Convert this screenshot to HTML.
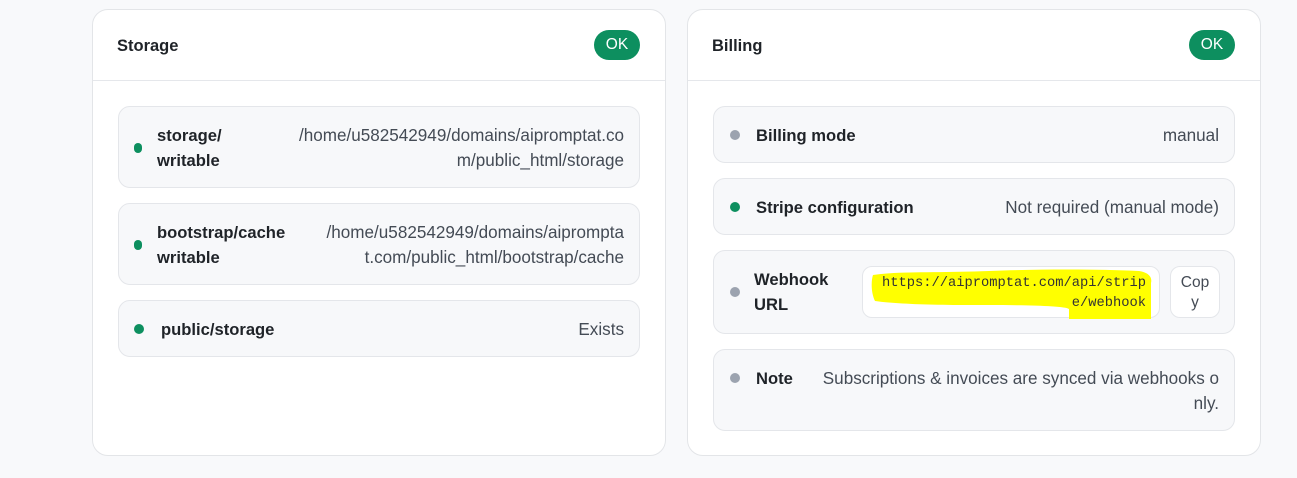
<!DOCTYPE html>
<html><head><style>
*{box-sizing:border-box;margin:0;padding:0}
body{width:1297px;height:478px;background:#f8f9fb;font-family:"Liberation Sans",sans-serif;color:#212529;position:relative;overflow:hidden;font-size:16px}
.card{position:absolute;top:9px;width:574px;height:447px;background:#fff;border:1px solid #e3e5e8;border-radius:16px}
.hd{position:absolute;left:0;right:0;top:0;height:71px;border-bottom:1px solid #e5e7eb}
.ttl{position:absolute;left:24px;top:27px;font-weight:bold;font-size:16.5px;color:#1f2328}
.ok{position:absolute;right:25px;top:20px;width:46px;height:30px;border-radius:15px;background:#0d8f5f;color:#fff;font-size:15.5px;text-align:center;line-height:30px}
.row{position:absolute;background:#f7f8fa;border:1px solid #e4e6ea;border-radius:12px}
.dot{position:absolute;width:8px;height:10px;border-radius:4px;background:#0d8f5f}
.g{background:#9ca3af;width:10px;height:10px;border-radius:5px}
.lb{position:absolute;font-weight:bold;line-height:25px;color:#1f2328;font-size:16.6px;white-space:nowrap}
.vl{position:absolute;right:15px;text-align:right;line-height:25px;color:#444b55;font-size:17.1px;white-space:nowrap}
.mono{font-family:"Liberation Mono",monospace;font-size:13.75px}
</style></head><body>
<div class="card" style="left:92px">
 <div class="hd"><div class="ttl">Storage</div><div class="ok">OK</div></div>
 <div class="row" style="left:25px;top:96px;width:522px;height:82px">
  <div class="dot" style="left:15px;top:36px"></div>
  <div class="lb" style="left:38px;top:16px">storage/<br>writable</div>
  <div class="vl" style="top:16px">/home/u582542949/domains/aipromptat.co<br>m/public_html/storage</div>
 </div>
 <div class="row" style="left:25px;top:193px;width:522px;height:82px">
  <div class="dot" style="left:15px;top:36px"></div>
  <div class="lb" style="left:38px;top:16px">bootstrap/cache<br>writable</div>
  <div class="vl" style="top:16px">/home/u582542949/domains/aipromptа<br>t.com/public_html/bootstrap/cache</div>
 </div>
 <div class="row" style="left:25px;top:290px;width:522px;height:57px">
  <div class="dot" style="left:15px;top:23px;width:10px;height:10px;border-radius:5px"></div>
  <div class="lb" style="left:42px;top:16px">public/storage</div>
  <div class="vl" style="top:16px">Exists</div>
 </div>
</div>
<div class="card" style="left:687px">
 <div class="hd"><div class="ttl">Billing</div><div class="ok">OK</div></div>
 <div class="row" style="left:25px;top:96px;width:522px;height:57px">
  <div class="dot g" style="left:16px;top:23px"></div>
  <div class="lb" style="left:42px;top:16px">Billing mode</div>
  <div class="vl" style="top:16px">manual</div>
 </div>
 <div class="row" style="left:25px;top:168px;width:522px;height:57px">
  <div class="dot" style="left:16px;top:23px;width:10px;height:10px;border-radius:5px"></div>
  <div class="lb" style="left:42px;top:16px">Stripe configuration</div>
  <div class="vl" style="top:16px">Not required (manual mode)</div>
 </div>
 <div class="row" style="left:25px;top:240px;width:522px;height:84px">
  <div class="dot g" style="left:16px;top:36px"></div>
  <div class="lb" style="left:40px;top:16px">Webhook<br>URL</div>
  <div style="position:absolute;left:148px;top:15px;width:298px;height:52px;background:#fff;border:1px solid #e4e6ea;border-radius:10px"></div>
  <svg style="position:absolute;left:155px;top:18px" width="290" height="50"><path d="M4 6 C30 2 70 4 120 2 C170 0 230 0 270 2 C282 4 283 10 282 14 L282 50 C260 52 230 52 200 51 L200 40 C195 36 140 36 90 36 C50 36 20 34 6 32 C2 24 2 12 4 6 Z" fill="#ffff00"/></svg>
  <div class="vl mono" style="right:88px;top:23px;line-height:20px;color:#333">https://aipromptat.com/api/strip<br>e/webhook</div>
  <div style="position:absolute;left:456px;top:15px;width:50px;height:52px;background:#fff;border:1px solid #e4e6ea;border-radius:10px;text-align:center;font-size:15.5px;line-height:20px;padding-top:6px;color:#444b55">Cop<br>y</div>
 </div>
 <div class="row" style="left:25px;top:339px;width:522px;height:82px">
  <div class="dot g" style="left:16px;top:23px"></div>
  <div class="lb" style="left:42px;top:16px">Note</div>
  <div class="vl" style="top:16px">Subscriptions &amp; invoices are synced via webhooks o<br>nly.</div>
 </div>
</div>
</body></html>
